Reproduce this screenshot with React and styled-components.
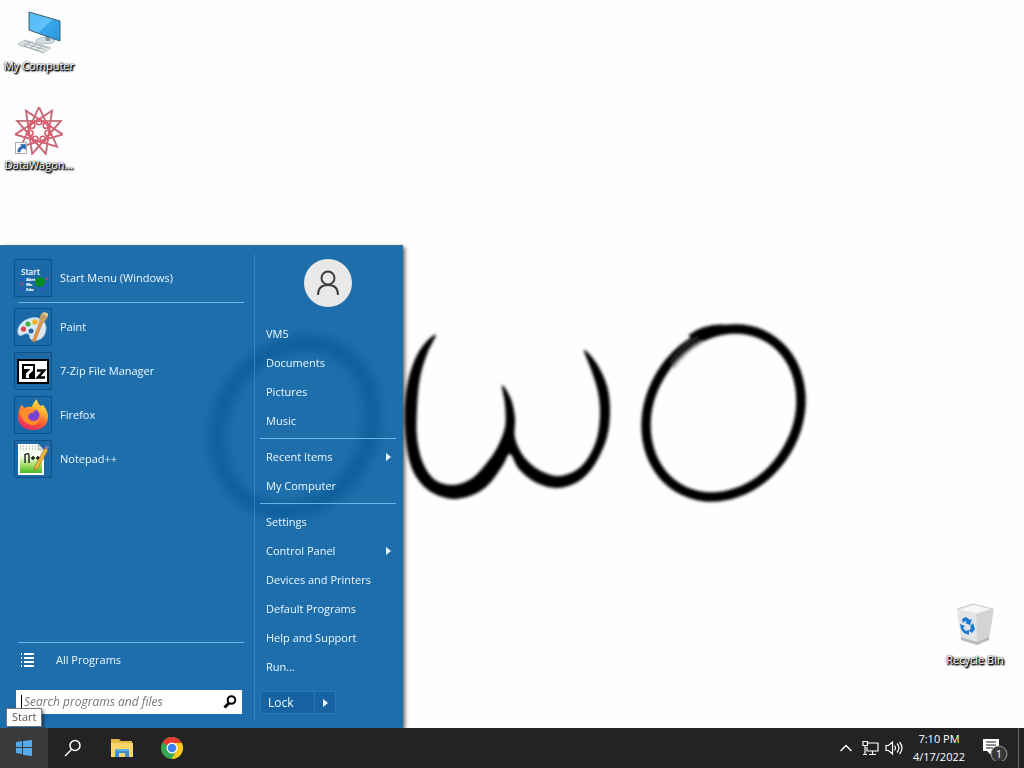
import React from "react";
import styled, { createGlobalStyle } from "styled-components";

const GlobalStyle = createGlobalStyle`
  *, *::before, *::after { box-sizing: border-box; }
  body { margin: 0; font-family: "Open Sans", "Noto Sans", sans-serif; font-size: 11px; font-weight: 500; line-height: 16px; }
  button, input { font: inherit; color: inherit; margin: 0; padding: 0; border: 0; background: none; text-align: left; }
  ul { list-style: none; margin: 0; padding: 0; }
  svg { display: block; flex: none; }
`;

const Screen = styled.div`
  display: flex;
  flex-direction: column;
  min-height: 100vh;
  background: #fefefe;
`;

const Desktop = styled.main`
  position: relative;
  flex: 1;
  display: flex;
  justify-content: space-between;
  min-height: 600px;
`;

const WallpaperSvg = styled.svg`
  position: absolute;
  inset: 0;
  width: 100%;
  height: 100%;
`;

const IconColumn = styled.div`
  position: relative;
  display: flex;
  flex-direction: column;
  justify-content: ${(p) => (p.$end ? "flex-end" : "flex-start")};
  gap: 33px;
  padding: ${(p) => (p.$end ? "0 10px 60px 0" : "8px 0 0")};
`;

const DesktopIcon = styled.button`
  display: flex;
  flex-direction: column;
  align-items: center;
  gap: 2px;
  width: 78px;
  color: #fff;
  white-space: nowrap;
  text-shadow: 0 0 2px #000, 1px 1px 2px #000, 1px 1px 1px #000, 1px 1px 2px #000;
`;

const Menu = styled.section`
  position: absolute;
  left: 0;
  bottom: 0;
  width: 403px;
  height: 483px;
  display: flex;
  color: #eaf8ff;
  background: rgba(14, 99, 166, 0.93);
  backdrop-filter: blur(6px);
  border-top: 1px solid #3d7290;
  box-shadow: 2px 2px 4px rgba(0, 0, 0, 0.6);
`;

const Programs = styled.div`
  width: 254px;
  display: flex;
  flex-direction: column;
  padding: 13px 10px 14px 14px;
`;

const Places = styled.nav`
  flex: 1;
  position: relative;
  display: flex;
  flex-direction: column;
  padding: 13px 7px 14px 6px;
  &::before {
    content: "";
    position: absolute;
    left: 0;
    top: 8px;
    bottom: 8px;
    width: 1px;
    background: #3c80b9;
  }
`;

const Rule = styled.hr`
  width: auto;
  height: 1px;
  border: 0;
  background: #6fb3e6;
  margin: ${(p) => p.$space || 0}px 0 ${(p) => p.$space || 0}px ${(p) => p.$inset || 0}px;
`;

const ProgramList = styled.ul`
  flex: 1;
  display: flex;
  flex-direction: column;
  gap: 6px;
`;

const Program = styled.button`
  display: flex;
  align-items: center;
  gap: 8px;
  width: 100%;
`;

const Tile = styled.span`
  display: grid;
  place-items: center;
  width: 38px;
  height: 38px;
  border: 1px solid #0f5088;
  background: #1c69a7;
`;

const AllPrograms = styled.button`
  display: flex;
  align-items: center;
  gap: 21px;
  height: 34px;
  padding-left: 7px;
  margin-bottom: 13px;
`;

const SearchBox = styled.label`
  display: flex;
  align-items: center;
  height: 24px;
  margin: 0 2px;
  padding: 0 5px;
  background: #fff;
  color: #111;
`;

const Caret = styled.span`
  width: 1px;
  height: 15px;
  background: #000;
`;

const SearchInput = styled.input`
  flex: 1;
  min-width: 0;
  padding-left: 2px;
  font-size: 12px;
  font-weight: 400;
  outline: 0;
  &::placeholder { color: #777; font-style: italic; opacity: 1; }
`;

const Avatar = styled.button`
  align-self: center;
  display: grid;
  place-items: center;
  width: 48px;
  height: 48px;
  margin-bottom: 12px;
  border-radius: 50%;
  background: #e9e9ea;
`;

const Place = styled.button`
  display: flex;
  align-items: center;
  justify-content: space-between;
  width: 100%;
  height: 29px;
  padding: 0 5px 0 6px;
`;

const LockGroup = styled.div`
  display: flex;
  align-self: flex-start;
  height: 23px;
  margin-top: 10px;
  border: 1px solid #2a77b3;
  background: #1763a1;
`;

const LockButton = styled.button`
  width: 53px;
  padding-left: 7px;
  font-size: 12px;
`;

const LockMore = styled.button`
  display: grid;
  place-items: center;
  width: 21px;
  border-left: 1px solid #2a77b3;
`;

const Tooltip = styled.div`
  position: absolute;
  left: 6px;
  bottom: 1px;
  height: 19px;
  padding: 0 5px;
  border: 1px solid #777;
  background: #fff;
  color: #555;
  box-shadow: 2px 2px 3px rgba(0, 0, 0, 0.45);
`;

const Taskbar = styled.footer`
  position: relative;
  display: flex;
  justify-content: space-between;
  height: 40px;
  background: #232323;
  color: #fff;
`;

const TaskGroup = styled.div`
  display: flex;
  align-items: stretch;
`;

const TaskButton = styled.button`
  display: grid;
  place-items: center;
  width: ${(p) => p.$w || 50}px;
  background: ${(p) => (p.$active ? "#3a3a3a" : "transparent")};
`;

const Clock = styled.button`
  width: 66px;
  line-height: 18px;
  text-align: center;
`;

const ShowDesktop = styled.button`
  width: 6px;
  border-left: 1px solid #666;
`;

/* Closed smooth curve through a list of points. */
function smooth(points) {
  const n = points.length;
  const at = (i) => points[(i + n) % n];
  let d = `M${at(0)}`;
  for (let i = 0; i < n; i++) {
    const [p0, p1, p2, p3] = [at(i - 1), at(i), at(i + 1), at(i + 2)];
    d += `C${p1[0] + (p2[0] - p0[0]) / 6},${p1[1] + (p2[1] - p0[1]) / 6} ${p2[0] - (p3[0] - p1[0]) / 6},${p2[1] - (p3[1] - p1[1]) / 6} ${p2}`;
  }
  return d + "Z";
}

const MOUTH = [
  [436, 335], [427, 341], [417, 355], [409, 377], [405, 402], [405, 430], [409, 459], [417, 478], [431, 492],
  [453, 499], [475, 494], [490, 483], [503, 465], [510, 454], [519, 469], [535, 482], [557, 488], [579, 481],
  [595, 464], [607, 437], [610, 410], [607, 386], [597, 364], [584, 350], [592, 372], [598, 392], [600, 414],
  [597, 438], [588, 458], [575, 471], [557, 476], [539, 470], [524, 457], [515, 438], [515, 418], [511, 399],
  [502, 385], [505, 405], [505, 427], [497, 448], [485, 465], [471, 479], [453, 485], [435, 480], [423, 463],
  [417, 438], [417, 408], [420, 378], [427, 354],
];

const Wallpaper = () => (
  <WallpaperSvg viewBox="0 0 1024 728" preserveAspectRatio="xMidYMid slice" aria-hidden="true">
    <defs>
      <filter id="soft" x="-5%" y="-5%" width="110%" height="110%">
        <feGaussianBlur stdDeviation="1.4" />
      </filter>
    </defs>
    <g filter="url(#soft)" fill="none" stroke="#000">
      <ellipse cx="295" cy="427" rx="74" ry="87" transform="rotate(31 295 427)" strokeWidth="14" />
      <path d={smooth(MOUTH)} fill="#000" stroke="none" />
      <ellipse cx="723.500" cy="413" rx="73.500" ry="87.500" transform="rotate(31 723.5 413)" strokeWidth="9.500" />
      <path d="M690 337Q704 326 724 327" strokeWidth="5" />
      <path d="M671 363Q681 347 698 337" stroke="#333" strokeWidth="2" />
      <path d="M673 368Q685 351 702 342" stroke="#999" strokeWidth="2" />
    </g>
  </WallpaperSvg>
);

const ComputerIcon = () => (
  <svg width="48" height="48" viewBox="15 8 48 48">
    <defs>
      <linearGradient id="screen" x1="0" y1="0" x2="1" y2="1">
        <stop offset="0" stopColor="#55b8f5" /><stop offset=".5" stopColor="#5fc3fb" /><stop offset=".52" stopColor="#38a7ec" /><stop offset="1" stopColor="#2d97e0" />
      </linearGradient>
    </defs>
    <path d="M36 40l6-3 13 3-2 3-11 1-6-2z" fill="#d3dde2" stroke="#8fa1aa" strokeWidth=".6" />
    <path d="M45 35l5 1v5h-4z" fill="#8a9ba5" />
    <path d="M29 12L60 21V41L29 30z" fill="url(#screen)" stroke="#36606f" strokeWidth="1" />
    <path d="M18 44l7-4 26 8-8 5z" fill="#edf0f1" stroke="#a9b3b7" strokeWidth=".8" />
    <path d="M20 45l23 7M22 43l24 7M24 41l24 7M24 46l7-4M30 48l7-4M36 50l7-4" stroke="#8e9a9f" strokeWidth=".7" />
  </svg>
);

const polar = (turn, r) => {
  const a = (turn - 0.25) * 2 * Math.PI;
  return `${(24 + r * Math.cos(a)).toFixed(1)} ${(24 + r * Math.sin(a)).toFixed(1)}`;
};
const STAR = "M" + Array.from({ length: 11 }, (_, i) => polar((i * 4) / 11, 24)).join("L") + "Z";

const DataWagonIcon = () => (
  <svg width="48" height="48" viewBox="0 0 48 48" fill="none">
    <path d={STAR} stroke="#b39a9e" strokeWidth="2" />
    <path d={STAR} stroke="#db5f6f" strokeWidth="1.2" />
    {[0, 1, 2, 3, 4, 5, 6].map((i) => {
      const [cx, cy] = polar(i / 7, 9).split(" ");
      return <circle key={i} cx={cx} cy={cy} r="2.800" stroke="#dc5d6d" strokeWidth="1.600" />;
    })}
    <path d="M0.500 35.500h11v11h-11z" fill="#fff" stroke="#aaa" />
    <path d="M3 45Q2.500 40 7 39.500L5.500 37.500H10.500V42.500L9 41Q5 41.500 5 45z" fill="#2464a9" stroke="#2464a9" strokeWidth=".6" />
  </svg>
);

const RecycleIcon = () => (
  <svg width="48" height="48" viewBox="951 603 48 48">
    <path d="M957 610l16-5 20 5-17 6z" fill="#e7e8e9" stroke="#c9cbcc" />
    <path d="M957 610l19 5 1 30-16-5z" fill="#e2e4e6" />
    <path d="M976 615l18-5-5 30-12 6z" fill="#d2d4d6" />
    <path d="M961 638l16 5 12-5v3l-12 5-16-5z" fill="#b7babc" />
    <path d="M960 611l13-5 17 4-14 4z" fill="#f7f7f7" />
    <g fill="#1b78d3">
      <path d="M962 620l4-2 4 3 2-1-2 6-5-2 2-1-2-1-2 2z" />
      <path d="M973 624l2 6-3 4-3-2 2-3-1-2z" />
      <path d="M969 631v5l-5-2-3-4-1-5 5 2-2 2 3 3z" />
    </g>
  </svg>
);

const StartMenuIcon = () => (
  <svg width="36" height="36" viewBox="0 0 36 36" fontFamily="Open Sans, sans-serif" fill="#fff">
    <circle cx="25" cy="22" r="5" fill="#078b22" />
    <g fill="#a8446f"><circle cx="32" cy="19" r="1.500" /><circle cx="7" cy="24" r="1.500" /></g>
    <g fill="#2e50d8"><circle cx="7" cy="19" r="1.500" /><circle cx="27" cy="29" r="1.500" /><circle cx="7" cy="29" r="1.500" /><circle cx="31" cy="25" r="1.500" /></g>
    <text x="6" y="15" fontSize="8" fontWeight="600">Start</text>
    <g fontSize="4" fontWeight="800"><text x="11" y="21">Abrt</text><text x="11" y="26">Me</text><text x="11" y="31">Edu</text></g>
  </svg>
);

const PaintIcon = () => (
  <svg width="36" height="36" viewBox="0 0 36 36">
    <path d="M16 9C26 7 32 13 31 21 30 29 23 33 17 31c-4-2-1-5-4-6-3-2-6 3-9 1-3-3-1-14 12-17z" fill="#dceaf4" stroke="#9dbfd9" strokeWidth=".8" />
    <circle cx="8.500" cy="20" r="2.600" fill="#da4545" /><circle cx="13" cy="15" r="2.600" fill="#49ae46" />
    <circle cx="20" cy="13" r="2.800" fill="#efb22d" /><circle cx="16" cy="22" r="2.500" fill="#245fa9" />
    <path d="M28 13l-8 20-2 0 0-3 7-18z" fill="#e3924b" stroke="#bd6f31" strokeWidth=".5" />
    <path d="M24 12q1-6 3-8l6 0q1 5-5 10z" fill="#c6a06a" /><path d="M27 4l3-1 3 2-1 3z" fill="#e6cb99" />
  </svg>
);

const SevenZipIcon = () => (
  <svg width="36" height="36" viewBox="0 0 36 36">
    <path d="M2 6h32v25H2z" /><path d="M4 8h28v21H4z" fill="#fff" /><path d="M7 11h13v15H7z" />
    <path d="M9 14.500h7.500v2.500l-4 4v4" fill="none" stroke="#fff" strokeWidth="3" />
    <path d="M22 17.500h7l-6 7h7" fill="none" stroke="#000" strokeWidth="2.600" />
  </svg>
);

const FirefoxIcon = () => (
  <svg width="36" height="36" viewBox="0 0 36 36">
    <defs>
      <linearGradient id="fox" x1=".8" y1="0" x2=".3" y2="1">
        <stop offset="0" stopColor="#fff04c" /><stop offset=".35" stopColor="#ffae2d" /><stop offset=".65" stopColor="#ff5634" /><stop offset="1" stopColor="#e62965" />
      </linearGradient>
    </defs>
    <path d="M6 8q2 1 4 3 3-2 7-1 1-5 5-8 0 4 4 7l2-1q5 6 5 12C33 28 27 33 18 33S2 27 3 19q0-5 3-11z" fill="url(#fox)" />
    <circle cx="18.500" cy="18" r="6" fill="#7a42d3" />
    <path d="M4 14q5-5 12-2l5 0q-1 3-5 4-3 1-3 4 1 4 6 4 4 0 6-3-1 8-9 7-9-2-12-14z" fill="#ff8b2a" />
  </svg>
);

const NotepadIcon = () => (
  <svg width="36" height="36" viewBox="0 0 36 36">
    <defs>
      <linearGradient id="page" x1="0" y1="0" x2="0" y2="1">
        <stop offset=".35" stopColor="#f8fff0" /><stop offset=".7" stopColor="#a5de66" /><stop offset="1" stopColor="#39b51e" />
      </linearGradient>
    </defs>
    <path d="M4 4h19l5 5v24H4z" fill="url(#page)" stroke="#fff" strokeWidth="2" />
    <path d="M5 5h18M5 8h16" stroke="#999" strokeDasharray="1 2" />
    <path d="M23 3v6h6z" fill="#d6ddd8" stroke="#888" strokeWidth=".5" />
    <path d="M10 22v-9M10 14q4-3 4 1v7M16 17h4M18 15v4M21 17h4M23 15v4" fill="none" stroke="#111" strokeWidth="1.300" />
    <path d="M30 7l3 2-10 18-4 3 1-5z" fill="#edb63e" stroke="#9b6419" strokeWidth=".6" />
    <path d="M31 4l3 2-1 3-3-2z" fill="#8c7ab5" />
  </svg>
);

const Arrow = () => (
  <svg width="5" height="8" viewBox="0 0 5 8"><path d="M0 0l5 4-5 4z" fill="currentColor" /></svg>
);

const PROGRAMS = [
  ["Paint", PaintIcon],
  ["7-Zip File Manager", SevenZipIcon],
  ["Firefox", FirefoxIcon],
  ["Notepad++", NotepadIcon],
];

const PLACES = [
  [["VM5"], ["Documents"], ["Pictures"], ["Music"]],
  [["Recent Items", true], ["My Computer"]],
  [["Settings"], ["Control Panel", true], ["Devices and Printers"], ["Default Programs"], ["Help and Support"], ["Run..."]],
];

const StartMenu = () => (
  <Menu aria-label="Start menu">
    <Programs>
      <Program><Tile><StartMenuIcon /></Tile>Start Menu (Windows)</Program>
      <Rule $space={5} $inset={4} />
      <ProgramList>
        {PROGRAMS.map(([name, Icon]) => (
          <li key={name}><Program><Tile><Icon /></Tile>{name}</Program></li>
        ))}
      </ProgramList>
      <Rule $inset={4} />
      <AllPrograms>
        <svg width="14" height="14" viewBox="0 0 14 14" stroke="#fff" strokeWidth="2">
          <path d="M3 1h10M3 5h10M3 9h10M3 13h10" /><path d="M0 1h1M0 5h1M0 9h1M0 13h1" />
        </svg>
        All Programs
      </AllPrograms>
      <SearchBox>
        <Caret />
        <SearchInput type="text" aria-label="Search" placeholder="Search programs and files" />
        <svg width="14" height="14" viewBox="0 0 14 14" fill="none" stroke="#000">
          <circle cx="8.500" cy="5" r="3.800" strokeWidth="2" /><path d="M6 8l-4.500 4.500" strokeWidth="3" />
        </svg>
      </SearchBox>
    </Programs>
    <Places aria-label="Places">
      <Avatar aria-label="User account">
        <svg width="24" height="26" viewBox="0 0 24 26" fill="none" stroke="#3b3b3b" strokeWidth="2">
          <circle cx="12" cy="8" r="6.500" /><path d="M2 25Q2 15 12 15T22 25" />
        </svg>
      </Avatar>
      {PLACES.map((group, i) => (
        <React.Fragment key={i}>
          {i > 0 && <Rule $space={3} />}
          <ul>
            {group.map(([name, more]) => (
              <li key={name}><Place>{name}{more && <Arrow />}</Place></li>
            ))}
          </ul>
        </React.Fragment>
      ))}
      <LockGroup>
        <LockButton>Lock</LockButton>
        <LockMore aria-label="Power options"><Arrow /></LockMore>
      </LockGroup>
    </Places>
  </Menu>
);

const WindowsIcon = () => (
  <svg width="18" height="18" viewBox="0 0 18 18" fill="#55a9e8">
    <path d="M1 3l6-1v6H1zM8 2l9-1v7H8zM1 9h6v6l-6-1zM8 9h9v8l-9-1z" />
  </svg>
);

const SearchIcon = () => (
  <svg width="18" height="18" viewBox="0 0 18 18" fill="none" stroke="#fff" strokeWidth="1.500">
    <circle cx="11" cy="6.500" r="5" /><path d="M7.500 10.500L1 17" />
  </svg>
);

const FolderIcon = () => (
  <svg width="22" height="18" viewBox="0 0 22 18">
    <path d="M0 0h8l2 2h11v16H0z" fill="#e9b948" /><path d="M0 4h22v14H0z" fill="#fbd66b" />
    <path d="M4 10h14v8h-4v-4H8v4H4z" fill="#3c91cb" /><path d="M4 10h14v2H4z" fill="#62b3e5" />
  </svg>
);

const ChromeIcon = () => (
  <svg width="24" height="24" viewBox="0 0 24 24">
    <circle cx="12" cy="12" r="11" fill="#36a852" />
    <path d="M12 12L2.500 6.500A11 11 0 0 1 21.500 6.500L22 7H12z" fill="#e33b2e" />
    <path d="M12 7h9.800A11 11 0 0 1 11.500 23l5-8.500z" fill="#fbc91a" />
    <circle cx="12" cy="12" r="5.500" fill="#fff" /><circle cx="12" cy="12" r="4.300" fill="#3b80ed" />
  </svg>
);

export default function App() {
  return (
    <Screen>
      <GlobalStyle />
      <Desktop>
        <Wallpaper />
        <IconColumn>
          <DesktopIcon><ComputerIcon />My Computer</DesktopIcon>
          <DesktopIcon><DataWagonIcon />DataWagon...</DesktopIcon>
        </IconColumn>
        <IconColumn $end>
          <DesktopIcon><RecycleIcon />Recycle Bin</DesktopIcon>
        </IconColumn>
        <StartMenu />
        <Tooltip role="tooltip">Start</Tooltip>
      </Desktop>
      <Taskbar>
        <TaskGroup>
          <TaskButton $w={48} $active aria-label="Start"><WindowsIcon /></TaskButton>
          <TaskButton $w={49} aria-label="Search"><SearchIcon /></TaskButton>
          <TaskButton aria-label="File Explorer"><FolderIcon /></TaskButton>
          <TaskButton aria-label="Chrome"><ChromeIcon /></TaskButton>
        </TaskGroup>
        <TaskGroup>
          <TaskButton $w={24} aria-label="Show hidden icons">
            <svg width="12" height="8" viewBox="0 0 12 8" fill="none" stroke="#fff" strokeWidth="1.400"><path d="M.5 7L6 1.500 11.500 7" /></svg>
          </TaskButton>
          <TaskButton $w={24} aria-label="Network">
            <svg width="17" height="16" viewBox="0 0 17 16" fill="none" stroke="#fff" strokeWidth="1.200">
              <path d="M6 3h10v8H5V7M10.500 11v3M7 14.500h7M1 1.500h4.500v4H1zM3 5.500v9M1 14.500h4" />
            </svg>
          </TaskButton>
          <TaskButton $w={24} aria-label="Volume">
            <svg width="18" height="16" viewBox="0 0 18 16" fill="none" stroke="#fff" strokeWidth="1.200">
              <path d="M1 5.500h2.500L7.500 2v12l-4-3.500H1zM9.500 5.500q2 2.500 0 5M12 3.500q4 4.500 0 9M14.500 2q5 6 0 12" />
            </svg>
          </TaskButton>
          <Clock>7:10 PM<br />4/17/2022</Clock>
          <TaskButton $w={46} aria-label="1 new notification">
            <svg width="26" height="26" viewBox="0 0 26 26">
              <path d="M1 4h16v12H9v4l-4-4H1z" fill="#fff" /><path d="M4 7h10M4 10h10M4 13h7" stroke="#232323" />
              <circle cx="17" cy="19" r="8" fill="#383838" stroke="#999" />
              <text x="17" y="23" fill="#fff" fontSize="11" textAnchor="middle">1</text>
            </svg>
          </TaskButton>
          <ShowDesktop aria-label="Show desktop" />
        </TaskGroup>
      </Taskbar>
    </Screen>
  );
}
